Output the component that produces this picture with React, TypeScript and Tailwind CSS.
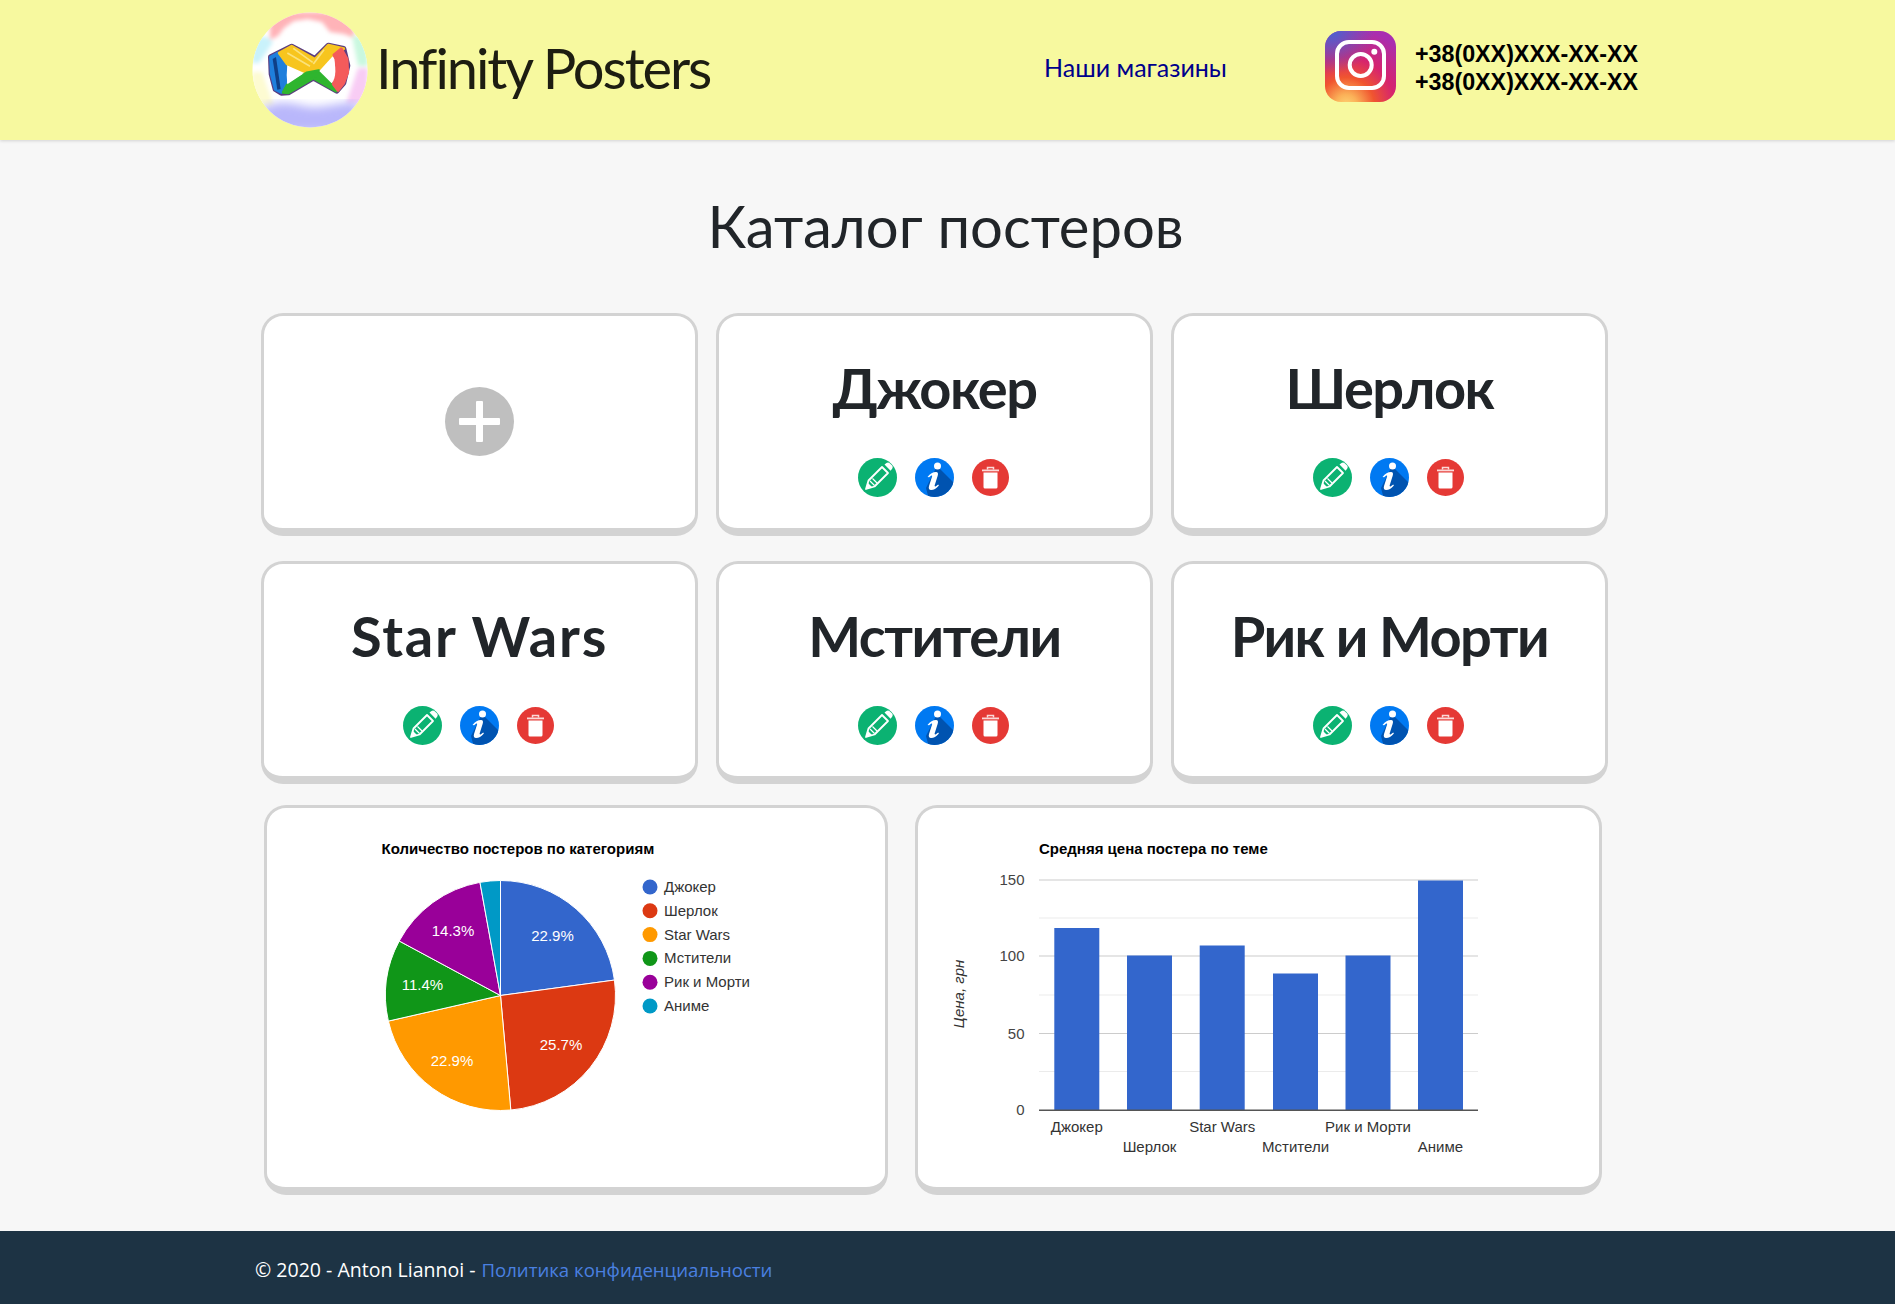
import React from "react";

function Logo() {
  const seg = { strokeWidth: 9, strokeLinejoin: "round" as const };
  return (
    <svg width="116" height="116" viewBox="0 0 116 116" className="shrink-0">
      <defs>
        <clipPath id="lc"><circle cx="58" cy="58" r="57.5" /></clipPath>
        <filter id="bl"><feGaussianBlur stdDeviation="5" /></filter>
        <filter id="bl2"><feGaussianBlur stdDeviation="2" /></filter>
      </defs>
      <g clipPath="url(#lc)">
        <rect width="116" height="116" fill="#fff" />
        <g filter="url(#bl2)">
          <path d="M18 0h84v26l-10-4-14-2-8-10-14-3-14 2-10 7-6 8-8 4z" fill="#ffb3b8" />
          <path d="M0 25h15l6 5-14 21H0z" fill="#c9f2fb" />
          <path d="M100 24h16v30h-10z" fill="#c9f8df" />
          <path d="M106 56h10v36h-22z" fill="#f8ccf4" />
          <path d="M0 60h10l12 34H0z" fill="#fdfbd2" />
        </g>
        <g filter="url(#bl)">
          <path d="M8 98c14-10 30-8 44-4 16 4 34-4 54-4v30H8z" fill="#b9b7fb" />
        </g>
      </g>
      <g transform="translate(-2 -3) scale(0.3333)">
        <path
          d="M62 144L125 112L195 149L235 109L281 119L293 170L281 222L260 246L190 207L115 251L94 252L76 241L64 195Z"
          fill="#fff"
          stroke="#5b3d80"
          strokeWidth="16"
          strokeLinejoin="round"
        />
        <path d="M62 144L84 132L108 172L106 232L94 250L76 241L64 195Z" fill="#1f7fdc" stroke="#1f7fdc" {...seg} />
        <path d="M68 150L78 144L92 240L82 242Z" fill="#0f3f86" />
        <path d="M88 132L125 112L195 151L235 109L281 119L250 138L206 183L170 190L112 165Z" fill="#f7c51e" stroke="#f7c51e" {...seg} />
        <path d="M112 132L180 172M130 118L188 160M222 122L190 165" stroke="#fbe27a" strokeWidth="5" fill="none" />
        <path d="M112 228L170 192L206 185L268 232L258 246L190 207L115 251L100 250Z" fill="#2fb52f" stroke="#2fb52f" {...seg} />
        <path d="M274 120L291 150L293 190L281 222L264 244L250 225L260 190L258 150L252 138Z" fill="#f45b5b" stroke="#f45b5b" {...seg} />
        <path d="M112 170L158 195L112 226Q108 198 112 170Z" fill="#fff" />
        <path d="M248 142L208 186L245 223Q256 210 256 185Q256 160 248 142Z" fill="#fff" />
      </g>
    </svg>
  );
}

function Instagram() {
  return (
    <svg width="71" height="71" viewBox="0 0 71 71" className="shrink-0">
      <defs>
        <radialGradient id="ig1" cx="0.3" cy="1.05" r="1.1">
          <stop offset="0" stopColor="#fed373" />
          <stop offset="0.14" stopColor="#fbb158" />
          <stop offset="0.36" stopColor="#f0552f" />
          <stop offset="0.62" stopColor="#d6246e" />
          <stop offset="1" stopColor="#a92eb0" />
        </radialGradient>
        <radialGradient id="ig2" cx="0.1" cy="0" r="0.6">
          <stop offset="0" stopColor="#4a62d0" />
          <stop offset="1" stopColor="#4a62d0" stopOpacity="0" />
        </radialGradient>
      </defs>
      <rect width="71" height="71" rx="16" fill="url(#ig1)" />
      <rect width="71" height="71" rx="16" fill="url(#ig2)" />
      <rect x="12" y="11" width="47" height="46" rx="12" fill="none" stroke="#fff" strokeWidth="4" />
      <circle cx="35.700" cy="34" r="11" fill="none" stroke="#fff" strokeWidth="4" />
      <circle cx="49.300" cy="20.700" r="3" fill="#fff" />
    </svg>
  );
}

function EditIcon() {
  return (
    <svg width="39" height="39" viewBox="0 0 39 39">
      <circle cx="19.500" cy="19.500" r="19.500" fill="#0bb272" />
      <g fill="none" stroke="#fff" strokeLinejoin="round">
        <path d="M8 31l2.500-8.500L24 9l6 6-13.500 13.500z" strokeWidth="1.800" />
        <path d="M12 23l4.500 4.500M14.500 20.500l4.500 4.500" strokeWidth="1.200" />
      </g>
      <path d="M26.500 6.500l2-1.500c1-.7 2.200-.7 3.200.2l2.400 2.400c.8 1 .8 2.200 0 3.200l-1.500 2z" fill="#fff" />
      <path d="M8 31l2-6 4 4z" fill="#fff" />
    </svg>
  );
}

function InfoIcon() {
  return (
    <svg width="39" height="39" viewBox="0 0 39 39">
      <defs>
        <clipPath id="ic"><circle cx="19.500" cy="19.500" r="19.500" /></clipPath>
      </defs>
      <circle cx="19.500" cy="19.500" r="19.500" fill="#0079f2" />
      <path d="M22 8L45 31V45H15L11 30z" fill="#0053b0" clipPath="url(#ic)" />
      <circle cx="22.500" cy="8" r="3.500" fill="#fff" />
      <path d="M12.500 19c2.800-3.200 5.300-5 8.500-5 2 0 2.400 1.500 1.700 3.800l-3 9.500c-.3 1 .3 1.400 1.200.9l2.300-1.700.7 1c-2.600 3-5.200 4.500-7.800 4.500-2.200 0-2.800-1.700-2-4.200l2.900-9c.4-1.100-.2-1.500-1.100-1l-1.800 1.400z" fill="#fff" />
    </svg>
  );
}

function TrashIcon() {
  return (
    <svg width="37" height="37" viewBox="0 0 37 37">
      <circle cx="18.500" cy="18.500" r="18.500" fill="#e53935" />
      <path d="M10 10.500h17v1.800H10z" fill="#fbd9d8" />
      <path d="M15.500 10.500V8.500h6v2" fill="none" stroke="#fbd9d8" strokeWidth="1.500" />
      <path d="M11.500 13.500h14v14.500a1.500 1.500 0 0 1-1.500 1.500H13a1.500 1.500 0 0 1-1.500-1.500z" fill="#fff" />
    </svg>
  );
}

function Card({ title, wide }: { title: string; wide?: boolean }) {
  return (
    <div className="h-[223px] flex flex-col items-center bg-white rounded-[22px] border-[3px] border-b-[8px] border-[#d3d3d3]">
      <div
        className={
          wide
            ? "mt-[36px] h-[72px] leading-[72px] text-[56px] font-bold text-[#212529] font-['Lato',sans-serif] tracking-[1.800px] whitespace-nowrap"
            : "mt-[36px] h-[72px] leading-[72px] text-[56px] font-bold text-[#212529] font-['Lato',sans-serif] tracking-[-1.500px] whitespace-nowrap"
        }
      >
        {title}
      </div>
      <div className="mt-[34px] pr-[2px] flex items-center gap-[18px]">
        <EditIcon />
        <InfoIcon />
        <TrashIcon />
      </div>
    </div>
  );
}

function AddCard() {
  return (
    <div className="h-[223px] flex items-center justify-center bg-white rounded-[22px] border-[3px] border-b-[8px] border-[#d3d3d3]">
      <div className="w-[69px] h-[69px] mb-[2px] rounded-full bg-[#bfbfbf] relative">
        <div className="absolute left-[14px] top-[31px] w-[41px] h-[7px] bg-white rounded-[1px]" />
        <div className="absolute left-[31px] top-[14px] w-[7px] h-[41px] bg-white rounded-[1px]" />
      </div>
    </div>
  );
}

const slices = [
  { name: "Джокер", v: 8, c: "#3366cc" },
  { name: "Шерлок", v: 9, c: "#dc3912" },
  { name: "Star Wars", v: 8, c: "#ff9900" },
  { name: "Мстители", v: 4, c: "#109618" },
  { name: "Рик и Морти", v: 5, c: "#990099" },
  { name: "Аниме", v: 1, c: "#0099c6" },
];

const chartFont = { fontFamily: "'Liberation Sans', Arial, sans-serif" };

function PieChart() {
  const cx = 500.5;
  const cy = 995.5;
  const r = 115;
  const total = 35;
  let acc = 0;
  const paths = slices.map((s) => {
    const a0 = (acc / total) * Math.PI * 2;
    acc += s.v;
    const a1 = (acc / total) * Math.PI * 2;
    const x0 = cx + r * Math.sin(a0);
    const y0 = cy - r * Math.cos(a0);
    const x1 = cx + r * Math.sin(a1);
    const y1 = cy - r * Math.cos(a1);
    const large = a1 - a0 > Math.PI ? 1 : 0;
    return { d: `M${cx} ${cy}L${x0} ${y0}A${r} ${r} 0 ${large} 1 ${x1} ${y1}Z`, c: s.c };
  });
  const labels = [
    ["22.9%", 552.5, 936],
    ["25.7%", 561, 1045],
    ["22.9%", 452, 1061],
    ["11.4%", 422.5, 985],
    ["14.3%", 453, 931],
  ] as const;
  return (
    <svg width="618" height="379" viewBox="267 808 618 379" className="block" style={chartFont}>
      <text x="381.500" y="854" fontSize="15" fontWeight="700" fill="#000">
        Количество постеров по категориям
      </text>
      {paths.map((p, i) => (
        <path key={i} d={p.d} fill={p.c} stroke="#fff" strokeWidth="1" />
      ))}
      {labels.map(([t, x, y], i) => (
        <text key={i} x={x} y={y + 5} textAnchor="middle" fontSize="15" fill="#fff">
          {t}
        </text>
      ))}
      {slices.map((s, i) => (
        <g key={s.name}>
          <circle cx="650" cy={887 + i * 23.800} r="7.500" fill={s.c} />
          <text x="664" y={892 + i * 23.800} fontSize="15" fill="#333">
            {s.name}
          </text>
        </g>
      ))}
    </svg>
  );
}

function BarChart() {
  const y0 = 1110;
  const grid = [
    [880, "#cccccc"],
    [918, "#ebebeb"],
    [956, "#cccccc"],
    [995, "#ebebeb"],
    [1033.500, "#cccccc"],
    [1071.500, "#ebebeb"],
  ] as const;
  const bars = [
    { x: 1054.300, top: 928 },
    { x: 1127, top: 955.500 },
    { x: 1199.700, top: 945.500 },
    { x: 1273, top: 973.500 },
    { x: 1345.500, top: 955.500 },
    { x: 1418, top: 880.500 },
  ];
  const names = ["Джокер", "Шерлок", "Star Wars", "Мстители", "Рик и Морти", "Аниме"];
  return (
    <svg width="681" height="379" viewBox="918 808 681 379" className="block" style={chartFont}>
      <text x="1039" y="854" fontSize="15" fontWeight="700" fill="#000">
        Средняя цена постера по теме
      </text>
      {grid.map(([y, c], i) => (
        <rect key={i} x="1039" y={y - 0.500} width="439" height="1" fill={c} />
      ))}
      {bars.map((b, i) => (
        <rect key={i} x={b.x} y={b.top} width="45" height={y0 - b.top} fill="#3366cc" />
      ))}
      <rect x="1039" y={y0 - 0.500} width="439" height="1.500" fill="#555" />
      {[
        ["150", 880],
        ["100", 956],
        ["50", 1033.500],
        ["0", 1110],
      ].map(([t, y]) => (
        <text key={t} x="1024.500" y={(y as number) + 5} textAnchor="end" fontSize="15" fill="#444">
          {t}
        </text>
      ))}
      {names.map((n, i) => (
        <text key={n} x={bars[i].x + 22.500} y={i % 2 === 0 ? 1131.500 : 1152} textAnchor="middle" fontSize="15" fill="#333">
          {n}
        </text>
      ))}
      <text
        transform="translate(963.500 994) rotate(-90)"
        textAnchor="middle"
        fontSize="15"
        fontStyle="italic"
        fill="#333"
      >
        Цена, грн
      </text>
    </svg>
  );
}

export default function App() {
  return (
    <div className="min-h-[1304px] bg-[#f7f7f7] flex flex-col font-['Open_Sans',sans-serif]">
      <header className="h-[140px] bg-[#f7f99f] shadow-[0_1px_3px_rgba(0,0,0,0.15)] flex items-center pl-[252px]">
        <Logo />
        <div className="ml-[8px] mb-[5px] text-[56px] leading-none tracking-[-2.100px] text-[#1d1d12] font-['Lato',sans-serif] font-normal whitespace-nowrap w-[336px]">
          Infinity Posters
        </div>
        <a className="ml-[332px] mb-[5px] text-[25px] leading-none text-[#00008b] font-['Lato',sans-serif] whitespace-nowrap w-[184px]">
          Наши магазины
        </a>
        <div className="ml-[97px] mb-[8px]">
          <Instagram />
        </div>
        <div className="ml-[19px] mb-[5px] text-[23.250px] leading-[28px] font-bold text-black font-['Liberation_Sans',sans-serif] whitespace-nowrap">
          <div>+38(0XX)XXX-XX-XX</div>
          <div>+38(0XX)XXX-XX-XX</div>
        </div>
      </header>
      <main className="flex-1 pl-[261px] pr-[287px]">
        <h1 className="mt-[52px] pl-[22px] h-[68px] leading-[68px] text-center text-[58px] text-[#212529] font-['Lato',sans-serif] whitespace-nowrap">
          Каталог постеров
        </h1>
        <div className="mt-[53px] grid grid-cols-3 gap-x-[18px] gap-y-[25px]">
          <AddCard />
          <Card title="Джокер" />
          <Card title="Шерлок" />
          <Card title="Star Wars" wide />
          <Card title="Мстители" />
          <Card title="Рик и Морти" />
        </div>
        <div className="mt-[21px] flex pl-[2.500px]">
          <div className="w-[624px] h-[390px] bg-white rounded-[22px] border-[3px] border-b-[8px] border-[#d3d3d3] overflow-hidden">
            <PieChart />
          </div>
          <div className="ml-[27px] w-[687px] h-[390px] bg-white rounded-[22px] border-[3px] border-b-[8px] border-[#d3d3d3] overflow-hidden">
            <BarChart />
          </div>
        </div>
      </main>
      <footer className="h-[73px] bg-[#1d3344] flex items-center pt-[5px] pl-[255px] text-[19.550px] text-white whitespace-nowrap">
        <span>© 2020 - Anton Liannoi - </span>
        <a className="ml-[6px] text-[18.600px] text-[#4a80e0]">Политика конфиденциальности</a>
      </footer>
    </div>
  );
}
